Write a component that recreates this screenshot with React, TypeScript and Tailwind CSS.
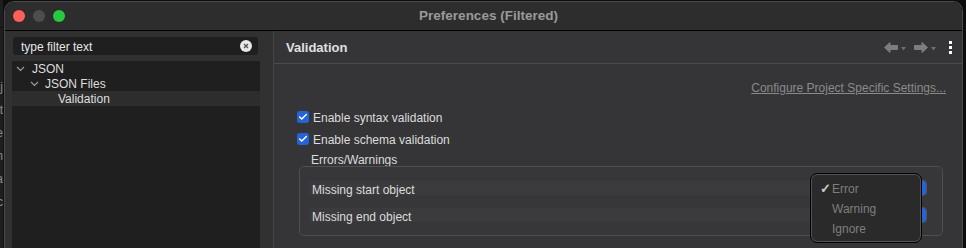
import { Check } from "lucide-react";

const ArrowIcon = ({ dir }: { dir: "left" | "right" }) => (
  <svg width="14" height="11" viewBox="0 0 14 11" className={dir === "right" ? "-scale-x-100" : ""}>
    <path d="M0.5 5.5 L6 0.5 L6 3.5 L13.5 3.5 L13.5 7.5 L6 7.5 L6 10.5 Z" fill="#7d7d7d" stroke="#7d7d7d" strokeLinejoin="round" />
  </svg>
);

const Caret = () => (
  <svg width="5" height="4" viewBox="0 0 5 4" className="mt-[3px]">
    <path d="M0 0 L5 0 L2.5 3.5 Z" fill="#6e6e6e" />
  </svg>
);

const Chevron = () => (
  <svg width="9" height="6" viewBox="0 0 9 6">
    <path d="M1 1 L4.5 4.5 L8 1" fill="none" stroke="#9a9a9a" strokeWidth="1.2" />
  </svg>
);

const Checkbox = ({ label }: { label: string }) => (
  <div className="flex items-center h-[16px] pl-[23px] gap-[4px]">
    <div className="w-[12px] h-[12px] rounded-[3px] bg-[#2563d9] flex items-center justify-center">
      <Check size={10} strokeWidth={3.5} className="text-white" />
    </div>
    <span className="text-[#dcdcdc] pt-[2px]">{label}</span>
  </div>
);

const SeverityRow = ({ label }: { label: string }) => (
  <div className="flex items-center h-[16px] gap-[2px]">
    <div className="flex-1 h-[14px] bg-[#3b3b3d] pl-[2px] pt-[3px] flex items-center text-[#dcdcdc]">{label}</div>
    <div className="w-[96px] h-[16px] rounded-[4px] border border-[#555] bg-[#2f2f31] flex justify-end">
      <div className="w-[16px] h-full rounded-r-[3px] bg-[#2563d9]" />
    </div>
  </div>
);

export default function App() {
  const backLines = ["j", "t", "e", "m", "a", "c"];

  return (
    <div className="relative w-[966px] h-[248px] bg-[#0d0d0d] flex overflow-hidden font-['Liberation_Sans',Arial,sans-serif] text-[12px] leading-[14px]">
      {/* window behind */}
      <div className="w-[4px] bg-[#1e1e1e] flex flex-col overflow-hidden border-r border-[#111]">
        <div className="h-[28px] border-b border-[#111] shrink-0" />
        <div className="flex flex-col pt-[52px] gap-[9px]">
          {backLines.map((c, i) => (
            <div key={i} className="flex justify-end whitespace-nowrap text-[#8a8a8a] leading-[14px]">
              <span>{c}</span>
            </div>
          ))}
        </div>
      </div>

      {/* preferences window */}
      <div className="flex-1 mt-[1px] flex flex-col rounded-t-[10px] border border-[#4a4a4a] border-b-0 overflow-hidden">
        {/* title bar */}
        <div className="h-[29px] shrink-0 bg-[#2d2d2d] border-b border-black flex items-center relative">
          <div className="flex gap-[8px] pl-[8px]">
            <div className="w-[12px] h-[12px] rounded-full bg-[#fe5f57]" />
            <div className="w-[12px] h-[12px] rounded-full bg-[#4d4d4d]" />
            <div className="w-[12px] h-[12px] rounded-full bg-[#28c840]" />
          </div>
          <div className="flex-1 text-center pr-[50px] font-bold text-[13.5px] text-[#9a9a9a]">Preferences (Filtered)</div>
        </div>

        <div className="flex flex-1">
          {/* left pane */}
          <div className="w-[268px] bg-[#313131] pl-[7px] pr-[13px] pt-[6px] flex flex-col">
            <div className="h-[18px] ml-[1px] mr-[2px] rounded-[3px] bg-[#1f1f1f] flex items-center pl-[8px] pr-[6px]">
              <span className="flex-1 text-[#e6e6e6] pt-[1px]">type filter text</span>
              <div className="w-[12px] h-[12px] rounded-full bg-[#e8e8e8] flex items-center justify-center">
                <svg width="6" height="6" viewBox="0 0 6 6">
                  <path d="M1 1 L5 5 M5 1 L1 5" stroke="#555" strokeWidth="1.4" />
                </svg>
              </div>
            </div>
            <div className="mt-[6px] flex-1 bg-[#1f1f1f] text-[#dedede]">
              <div className="h-[15px] flex items-center pl-[4px] gap-[7px]">
                <Chevron />
                <span className="pt-[1px]">JSON</span>
              </div>
              <div className="h-[15px] flex items-center pl-[18px] gap-[6px]">
                <Chevron />
                <span className="pt-[1px]">JSON Files</span>
              </div>
              <div className="h-[15px] flex items-center pl-[46px] pt-[1px] bg-[#2d2d2d]">Validation</div>
            </div>
          </div>

          <div className="w-[1px] bg-[#444446]" />

          {/* right pane */}
          <div className="flex-1 bg-[#353537] flex flex-col">
            <div className="h-[33px] border-b border-[#4b4b4d] flex items-center pl-[12px] pr-[10px]">
              <span className="flex-1 font-bold text-[13px] text-[#e0e0e0] pt-[1px]">Validation</span>
              <div className="flex items-center gap-[3px]">
                <ArrowIcon dir="left" />
                <Caret />
                <div className="w-[2px]" />
                <ArrowIcon dir="right" />
                <Caret />
                <div className="w-[7px]" />
                <div className="flex flex-col gap-[2px]">
                  <div className="w-[3px] h-[3px] bg-white" />
                  <div className="w-[3px] h-[3px] bg-white" />
                  <div className="w-[3px] h-[3px] bg-white" />
                </div>
              </div>
            </div>

            <div className="mt-[17px] pr-[16px] text-right">
              <span className="underline text-[#8a8a8a]">Configure Project Specific Settings...</span>
            </div>

            <div className="mt-[14px]">
              <Checkbox label="Enable syntax validation" />
            </div>
            <div className="mt-[6px]">
              <Checkbox label="Enable schema validation" />
            </div>

            <div className="mt-[5px] pl-[37px] pt-[1px] text-[#dcdcdc]">Errors/Warnings</div>

            <div className="mt-[-1px] ml-[25px] mr-[19px] h-[70px] rounded-[5px] border border-[#4f4f51] bg-[#373739] pl-[10px] pr-[15px] pt-[13px] flex flex-col gap-[11px]">
              <SeverityRow label="Missing start object" />
              <SeverityRow label="Missing end object" />
            </div>
          </div>
        </div>
      </div>
      <div className="w-[3px]" />

      {/* open popup menu */}
      <div className="absolute left-[810px] top-[173px] w-[112px] h-[70px] rounded-[7px] border border-black bg-[#2a2a2b] shadow-[inset_0_0_0_1px_#525254] pt-[5px] flex flex-col text-[#7e7e7e]">
        <div className="h-[20px] flex items-center pl-[9px]">
          <span className="w-[12px] text-[#c8c8c8] text-[13px] font-bold">✓</span>
          <span>Error</span>
        </div>
        <div className="h-[20px] flex items-center pl-[21px]">Warning</div>
        <div className="h-[20px] flex items-center pl-[21px]">Ignore</div>
      </div>
    </div>
  );
}
